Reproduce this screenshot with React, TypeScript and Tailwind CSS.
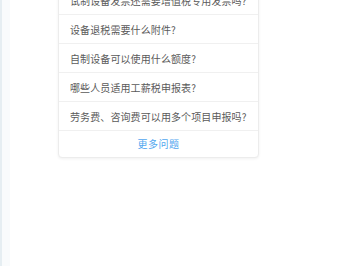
import React from "react";

const questions = [
  "试制设备发票还需要增值税专用发票吗?",
  "设备退税需要什么附件?",
  "自制设备可以使用什么额度?",
  "哪些人员适用工薪税申报表?",
  "劳务费、咨询费可以用多个项目申报吗?",
];

export default function App() {
  return (
    <div
      className="flex h-[266px] w-[350px] overflow-hidden bg-white"
      style={{ fontFamily: '"Noto Sans CJK SC", "Noto Sans", sans-serif' }}
    >
      <div className="h-full w-[10px] shrink-0 border-l-2 border-[#e6eef2] bg-[#f9fbfc]" />
      <div className="flex-1">
        <div className="ml-[48px] mt-[-15px] w-[201px] overflow-hidden rounded-[4px] border border-[#ececec] bg-white shadow-[0_1px_3px_rgba(0,0,0,0.06)]">
          {questions.map((q) => (
            <div
              key={q}
              className="flex h-[29px] items-center border-b border-[#f0f0f0] pl-[11px] text-[10px] tracking-[0.1px] text-[#5a5a5a]"
            >
              {q}
            </div>
          ))}
          <div className="flex h-[26px] items-center justify-center pb-[1px] text-[10px] tracking-[0.5px] text-[#52a7ef]">
            更多问题
          </div>
        </div>
      </div>
    </div>
  );
}
